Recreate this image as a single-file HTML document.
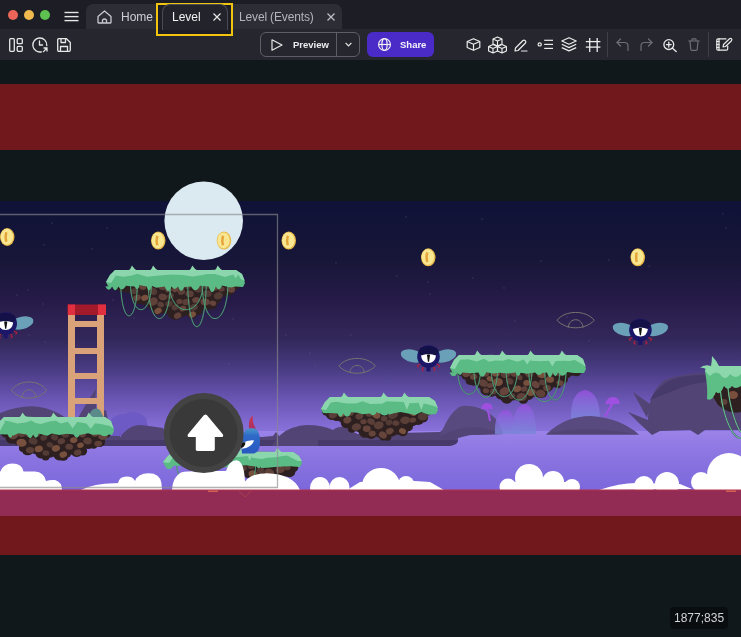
<!DOCTYPE html>
<html><head><meta charset="utf-8">
<style>
*{margin:0;padding:0;box-sizing:border-box}
html,body{width:741px;height:637px;overflow:hidden;background:#10181b;font-family:"Liberation Sans",sans-serif}
.abs{position:absolute}
#tabbar{left:0;top:0;width:741px;height:29px;background:#1d1e25;z-index:2}
#toolbar{left:0;top:29px;width:741px;height:31px;background:#25262e}
.dot{position:absolute;width:10px;height:10px;border-radius:50%;top:10px}
.tab{position:absolute;top:4px;height:25px;background:#2c2d35;border-radius:7px 7px 0 0}
.tabtxt{position:absolute;font-size:12px;line-height:12px;white-space:nowrap;will-change:transform}
svg.ic{position:absolute;overflow:visible}
#scene{position:absolute;left:0;top:60px;width:741px;height:577px}
</style></head><body>
<div id="tabbar" class="abs">
  <div class="dot" style="left:8px;background:#ec6559"></div>
  <div class="dot" style="left:24px;background:#f0b94e"></div>
  <div class="dot" style="left:40px;background:#5ec04f"></div>
  <svg class="ic" style="left:64px;top:11px" width="15" height="11" viewBox="0 0 15 11"><g stroke="#e6e6e6" stroke-width="1.4"><line x1="0.5" y1="1.5" x2="14.5" y2="1.5"/><line x1="0.5" y1="5.6" x2="14.5" y2="5.6"/><line x1="0.5" y1="9.6" x2="14.5" y2="9.6"/></g></svg>
  <div class="tab" style="left:86px;width:70px;border-radius:7px 0 0 0"></div>
  <svg class="ic" style="left:97px;top:10px" width="15" height="14" viewBox="0 0 15 14"><path d="M1 6.5 L7.5 1 L14 6.5 V12.5 Q14 13 13.5 13 H1.5 Q1 13 1 12.5 Z M5.5 13 V10 Q7.5 8 9.5 10 V13" fill="none" stroke="#c9c9cf" stroke-width="1.3" stroke-linejoin="round"/></svg>
  <div class="tabtxt" style="left:121px;top:11px;color:#cfcfd5">Home</div>
  <!-- yellow highlight -->
  <div class="abs" style="left:156px;top:3px;width:77px;height:33px;border:2px solid #f1c40f;background:#1e1f26"></div>
  <div class="abs" style="left:162px;top:4px;width:66px;height:26px;border:1px solid #4a4b53;border-bottom:none;border-radius:8px 8px 0 0;background:#23242b"></div>
  <div class="tabtxt" style="left:171.5px;top:11px;color:#f2f2f2">Level</div>
  <svg class="ic" style="left:213px;top:13px" width="8" height="8" viewBox="0 0 8 8"><path d="M0.5 0.5 L7.5 7.5 M7.5 0.5 L0.5 7.5" stroke="#e8e8e8" stroke-width="1.2"/></svg>
  <div class="tab" style="left:233px;width:109px;border-radius:0 7px 0 0"></div>
  <div class="tabtxt" style="left:239px;top:11px;color:#b4b4bc;letter-spacing:-0.15px">Level (Events)</div>
  <svg class="ic" style="left:327px;top:13px" width="8" height="8" viewBox="0 0 8 8"><path d="M0.5 0.5 L7.5 7.5 M7.5 0.5 L0.5 7.5" stroke="#c0c0c8" stroke-width="1.2"/></svg>
</div>
<div id="toolbar" class="abs">
  <!-- left icons -->
  <svg class="ic" style="left:9px;top:9px" width="14" height="14" viewBox="0 0 14 14"><g fill="none" stroke="#e8e8e8" stroke-width="1.3"><rect x="0.7" y="0.7" width="4.6" height="12.6" rx="1"/><rect x="8.2" y="0.7" width="5.1" height="5" rx="1"/><rect x="8.2" y="8.3" width="5.1" height="5" rx="1"/></g></svg>
  <svg class="ic" style="left:32px;top:8px" width="17" height="16" viewBox="0 0 17 16"><g fill="none" stroke="#e8e8e8" stroke-width="1.3" stroke-linecap="round"><path d="M14.8 8.5 A7 7 0 1 0 9.5 14.8"/><path d="M7.5 4 V8 H10.5"/><path d="M11.5 14.6 L15 11 M12 11 H15 V14"/></g></svg>
  <svg class="ic" style="left:57px;top:9px" width="14" height="14" viewBox="0 0 14 14"><g fill="none" stroke="#e8e8e8" stroke-width="1.3" stroke-linejoin="round"><path d="M1.5 0.7 H9.5 L13.3 4.5 V12 Q13.3 13.3 12 13.3 H2 Q0.7 13.3 0.7 12 V2 Q0.7 0.7 2 0.7 Z"/><path d="M4 0.7 V4.5 H8.5 V0.7"/><path d="M3.5 13.3 V8.5 H10.5 V13.3"/></g></svg>
  <!-- preview -->
  <div class="abs" style="left:260px;top:3px;width:100px;height:25px;border:1px solid #5d5e66;border-radius:6px"></div>
  <div class="abs" style="left:336px;top:4px;width:1px;height:23px;background:#5d5e66"></div>
  <svg class="ic" style="left:271px;top:10px" width="12" height="12" viewBox="0 0 12 12"><path d="M1 0.8 L11 6 L1 11.2 Z" fill="none" stroke="#e8e8e8" stroke-width="1.2" stroke-linejoin="round"/></svg>
  <div class="abs" style="left:293px;top:10px;font-size:9.5px;line-height:12px;font-weight:bold;color:#ececf0;will-change:transform">Preview</div>
  <svg class="ic" style="left:345px;top:13px" width="7" height="5" viewBox="0 0 7 5"><path d="M0.6 0.8 L3.5 3.8 L6.4 0.8" fill="none" stroke="#e8e8e8" stroke-width="1.2"/></svg>
  <!-- share -->
  <div class="abs" style="left:367px;top:3px;width:67px;height:25px;background:#4b2bc8;border-radius:6px"></div>
  <svg class="ic" style="left:378px;top:9px" width="13" height="13" viewBox="0 0 13 13"><g fill="none" stroke="#f0f0f0" stroke-width="1.2"><circle cx="6.5" cy="6.5" r="5.9"/><ellipse cx="6.5" cy="6.5" rx="2.6" ry="5.9"/><line x1="0.6" y1="6.5" x2="12.4" y2="6.5"/></g></svg>
  <div class="abs" style="left:400px;top:10px;font-size:9.5px;line-height:12px;font-weight:bold;color:#f4f4f8;will-change:transform">Share</div>
  <!-- right icons -->
  <svg class="ic" style="left:466px;top:9px" width="15" height="13" viewBox="0 0 15 13"><g fill="none" stroke="#ececec" stroke-width="1.2" stroke-linejoin="round"><path d="M7.5 0.7 L13.8 3.5 V9.5 L7.5 12.3 L1.2 9.5 V3.5 Z"/><path d="M1.2 3.5 L7.5 6.3 L13.8 3.5 M7.5 6.3 V12.3"/></g></svg>
  <svg class="ic" style="left:488px;top:7px" width="19" height="18" viewBox="0 0 19 18"><g fill="none" stroke="#ececec" stroke-width="1.15" stroke-linejoin="round"><path d="M9.5,1 L14,3 V8 L9.5,10 L5,8 V3 Z M5,3 L9.5,5 L14,3 M9.5,5 V10"/><path d="M5,8.5 L9.5,10.5 V15 L5,17 L0.6,15 V10.5 Z M0.6,10.5 L5,12.5 L9.5,10.5 M5,12.5 V17"/><path d="M14,8.5 L18.4,10.5 V15 L14,17 L9.5,15 V10.5 Z M9.5,10.5 L14,12.5 L18.4,10.5 M14,12.5 V17"/></g></svg>
  <svg class="ic" style="left:514px;top:10px" width="14" height="13" viewBox="0 0 14 13"><g fill="none" stroke="#ececec" stroke-width="1.2" stroke-linejoin="round" stroke-linecap="round"><path d="M1 12 L1.5 9 L9 1.5 Q10 0.7 11 1.5 L11.5 2 Q12.3 3 11.5 4 L4 11.5 Z"/><path d="M7.5 12 H13"/></g></svg>
  <svg class="ic" style="left:537px;top:11px" width="17" height="11" viewBox="0 0 17 11"><g fill="none" stroke="#ececec" stroke-width="1.2"><circle cx="2.7" cy="4.4" r="1.6"/><line x1="7.2" y1="0.3" x2="16" y2="0.3"/><line x1="7.2" y1="4.4" x2="16" y2="4.4"/><line x1="7.2" y1="8.4" x2="16" y2="8.4"/></g></svg>
  <svg class="ic" style="left:561px;top:8px" width="16" height="15" viewBox="0 0 16 15"><g fill="none" stroke="#ececec" stroke-width="1.2" stroke-linejoin="round"><path d="M8 0.7 L15.2 4 L8 7.3 L0.8 4 Z"/><path d="M0.8 7.3 L8 10.6 L15.2 7.3"/><path d="M0.8 10.6 L8 13.9 L15.2 10.6"/></g></svg>
  <svg class="ic" style="left:585px;top:9px" width="16" height="14" viewBox="0 0 16 14"><g stroke="#ececec" stroke-width="1.3"><line x1="4.7" y1="0" x2="4.7" y2="14"/><line x1="12.2" y1="0" x2="12.2" y2="14"/><line x1="0.8" y1="3.6" x2="15.4" y2="3.6"/><line x1="0.8" y1="9.1" x2="15.4" y2="9.1"/></g></svg>
  <div class="abs" style="left:607px;top:3px;width:1px;height:25px;background:#3e3f47"></div>
  <svg class="ic" style="left:616px;top:9px" width="13" height="13" viewBox="0 0 13 13"><g fill="none" stroke="#6e6f76" stroke-width="1.2" stroke-linecap="round" stroke-linejoin="round"><path d="M4.5 1 L1 4.5 L4.5 8"/><path d="M1 4.5 H8.5 Q12 4.5 12 8 V12.5"/></g></svg>
  <svg class="ic" style="left:640px;top:9px" width="13" height="13" viewBox="0 0 13 13"><g fill="none" stroke="#6e6f76" stroke-width="1.2" stroke-linecap="round" stroke-linejoin="round"><path d="M8.5 1 L12 4.5 L8.5 8"/><path d="M12 4.5 H4.5 Q1 4.5 1 8 V12.5"/></g></svg>
  <svg class="ic" style="left:663px;top:10px" width="14" height="13" viewBox="0 0 14 13"><g fill="none" stroke="#ececec" stroke-width="1.3" stroke-linecap="round"><circle cx="5.8" cy="5.6" r="4.9"/><line x1="9.5" y1="9.3" x2="13.2" y2="12.6"/><line x1="5.8" y1="3.2" x2="5.8" y2="8"/><line x1="3.4" y1="5.6" x2="8.2" y2="5.6"/></g></svg>
  <svg class="ic" style="left:688px;top:9px" width="12" height="13" viewBox="0 0 12 13"><g fill="none" stroke="#6e6f76" stroke-width="1.2" stroke-linejoin="round" stroke-linecap="round"><path d="M0.8 3 H11.2 M4 3 V1.5 Q4 0.8 4.7 0.8 H7.3 Q8 0.8 8 1.5 V3"/><path d="M2 3 L2.8 11.5 Q2.9 12.3 3.7 12.3 H8.3 Q9.1 12.3 9.2 11.5 L10 3"/></g></svg>
  <div class="abs" style="left:708px;top:3px;width:1px;height:25px;background:#3e3f47"></div>
  <svg class="ic" style="left:716px;top:9px" width="17" height="13" viewBox="0 0 17 13"><g fill="none" stroke="#ececec" stroke-width="1.2" stroke-linejoin="round" stroke-linecap="round"><path d="M10 0.8 H2 Q0.8 0.8 0.8 2 V11 Q0.8 12.2 2 12.2 H10.5 Q11.7 12.2 11.7 11 V8"/><path d="M3 0.8 V12.2"/><path d="M0.8 3.5 H3 M0.8 6.5 H3 M0.8 9.5 H3"/><path d="M7 9 L7.5 6.5 L13.5 0.8 Q14.5 0 15.5 0.8 Q16.3 1.8 15.5 2.7 L9.5 8.5 Z"/></g></svg>
</div>
<div id="scene">
<svg width="741" height="577" viewBox="0 60 741 577" style="display:block">
  <defs>
    <linearGradient id="sky" x1="0" y1="201" x2="0" y2="432" gradientUnits="userSpaceOnUse">
      <stop offset="0" stop-color="#0f1237"/>
      <stop offset="0.255" stop-color="#171638"/>
      <stop offset="0.43" stop-color="#261b48"/>
      <stop offset="0.60" stop-color="#33285a"/>
      <stop offset="0.73" stop-color="#4a3c84"/>
      <stop offset="0.86" stop-color="#6a56b4"/>
      <stop offset="1" stop-color="#8a72dc"/>
    </linearGradient>
    <linearGradient id="gnd" x1="0" y1="431" x2="0" y2="490" gradientUnits="userSpaceOnUse">
      <stop offset="0" stop-color="#9a82e8"/>
      <stop offset="0.45" stop-color="#8a74e0"/>
      <stop offset="1" stop-color="#7c68dc"/>
    </linearGradient>
  </defs>
  <rect x="0" y="60" width="741" height="577" fill="#10181b"/>
  <rect x="0" y="84" width="741" height="66" fill="#70181c"/>
  <rect x="0" y="201" width="741" height="231" fill="url(#sky)"/><rect x="0" y="431" width="741" height="59" fill="url(#gnd)"/>
  <!--SCENE-->
<circle cx="240" cy="234" r="0.7" fill="#6a6a90" opacity="0.45"/>
<circle cx="482" cy="219" r="0.7" fill="#6a6a90" opacity="0.45"/>
<circle cx="397" cy="276" r="0.7" fill="#6a6a90" opacity="0.45"/>
<circle cx="43" cy="304" r="0.7" fill="#6a6a90" opacity="0.45"/>
<circle cx="28" cy="290" r="0.7" fill="#6a6a90" opacity="0.45"/>
<circle cx="52" cy="223" r="0.7" fill="#6a6a90" opacity="0.45"/>
<circle cx="315" cy="366" r="0.7" fill="#6a6a90" opacity="0.45"/>
<circle cx="92" cy="249" r="0.7" fill="#6a6a90" opacity="0.45"/>
<circle cx="465" cy="390" r="0.7" fill="#6a6a90" opacity="0.45"/>
<circle cx="428" cy="282" r="0.7" fill="#6a6a90" opacity="0.45"/>
<circle cx="723" cy="214" r="0.7" fill="#6a6a90" opacity="0.45"/>
<circle cx="636" cy="261" r="0.7" fill="#6a6a90" opacity="0.45"/>
<circle cx="107" cy="228" r="0.7" fill="#6a6a90" opacity="0.45"/>
<circle cx="229" cy="364" r="0.7" fill="#6a6a90" opacity="0.45"/>
<circle cx="134" cy="318" r="0.7" fill="#6a6a90" opacity="0.45"/>
<circle cx="473" cy="278" r="0.7" fill="#6a6a90" opacity="0.45"/>
<circle cx="406" cy="217" r="0.7" fill="#6a6a90" opacity="0.45"/>
<circle cx="44" cy="245" r="0.7" fill="#6a6a90" opacity="0.45"/>
<circle cx="504" cy="288" r="0.7" fill="#6a6a90" opacity="0.45"/>
<circle cx="233" cy="319" r="0.7" fill="#6a6a90" opacity="0.45"/>
<circle cx="336" cy="263" r="0.7" fill="#6a6a90" opacity="0.45"/>
<circle cx="589" cy="341" r="0.7" fill="#6a6a90" opacity="0.45"/>
<circle cx="181" cy="317" r="0.7" fill="#6a6a90" opacity="0.45"/>
<circle cx="389" cy="376" r="0.7" fill="#6a6a90" opacity="0.45"/>
<circle cx="541" cy="261" r="0.7" fill="#6a6a90" opacity="0.45"/>
<circle cx="726" cy="228" r="0.7" fill="#6a6a90" opacity="0.45"/>
<circle cx="310" cy="353" r="0.7" fill="#6a6a90" opacity="0.45"/>
<circle cx="113" cy="300" r="0.7" fill="#6a6a90" opacity="0.45"/>
<circle cx="29" cy="335" r="0.7" fill="#6a6a90" opacity="0.45"/>
<circle cx="567" cy="317" r="0.7" fill="#6a6a90" opacity="0.45"/>
<circle cx="649" cy="266" r="0.7" fill="#6a6a90" opacity="0.45"/>
<circle cx="515" cy="321" r="0.7" fill="#6a6a90" opacity="0.45"/>
<circle cx="430" cy="294" r="0.7" fill="#6a6a90" opacity="0.45"/>
<circle cx="622" cy="389" r="0.7" fill="#6a6a90" opacity="0.45"/>
<circle cx="351" cy="335" r="0.7" fill="#6a6a90" opacity="0.45"/>
<circle cx="45" cy="342" r="0.7" fill="#6a6a90" opacity="0.45"/>
<circle cx="480" cy="399" r="0.7" fill="#6a6a90" opacity="0.45"/>
<circle cx="609" cy="260" r="0.7" fill="#6a6a90" opacity="0.45"/>
<circle cx="286" cy="335" r="0.7" fill="#6a6a90" opacity="0.45"/>
<circle cx="17" cy="295" r="0.7" fill="#6a6a90" opacity="0.45"/>
<path d="M0,413 Q25,403 45,408 Q58,412 66,418 L78,418 Q88,400 96,389 Q94,405 99,418 L103,411 L106,410 L108,420 L120,430 L120,437 L0,437 Z" fill="#524474"/>
<path d="M105,436 Q108,413 125,414 Q135,408 146,418 L150,436 Z" fill="#6e5ac4"/>
<path d="M118,440 Q128,425 140,425 Q150,426 163,428 L170,440 Z" fill="#524474"/>
<path d="M0,437 L262,437 L273,436 L276,432 L280,437 Q292,425 307,425 Q322,425 333,430 Q338,426 345,427 Q352,432 358,434 L440,432 Q465,412 480,411 L482,432 L458,438 Q458,446 445,446 L0,446 Z" fill="#524474"/>
<path d="M0,440 L458,440 Q458,446 445,446 L0,446 Z" fill="#463a6a"/>
<path d="M440,436 Q450,410 462,406 Q480,404 495,418 Q502,428 503,434 Z" fill="#58497e"/>
<path d="M440,436 Q470,420 503,434 Z" fill="#524474"/>
<path d="M272,446 Q280,432 292,428 Q305,424 318,440 L318,446 Z" fill="#524474"/>
<defs><linearGradient id="mb" x1="0" y1="0" x2="0" y2="1"><stop offset="0" stop-color="#9a4ee0"/><stop offset="0.3" stop-color="#8a66dc"/><stop offset="1" stop-color="#7a86d8"/></linearGradient></defs>
<path d="M495,434 Q494,412 506,410 Q515,411 516,434 Z" fill="url(#mb)" opacity="0.85"/>
<path d="M513,434 Q512,406 525,404 Q536,406 536,434 Z" fill="url(#mb)" opacity="0.85"/>
<path d="M571,420 Q570,392 585,390 Q600,392 600,420 Z" fill="url(#mb)" opacity="0.85"/>
<g fill="#a050e0"><path d="M481,409 Q482,403 487,403 Q492,403 493,409 Z"/><path d="M486,408 L488,408 Q490,414 491,421 L489,421 Q488,414 486,408 Z"/><path d="M605,404 Q607,397 613,397 Q619,397 620,404 Z"/><path d="M611,403 L614,403 Q610,410 606,417 L604,416 Q608,410 611,403 Z"/></g>
<path d="M546,434.5 Q565,416 591,416 Q620,418 639,434.5 Z" fill="#58497e"/>
<path d="M546,434.5 Q580,424 639,434.5 Z" fill="#524474"/>
<path d="M628,412 L648,420 Q648,392 665,380 Q690,370 741,373 L741,430 L705,430 L698,435 L690,430 L660,431 L652,435 L640,424 Z M633,392 L650,404 L647,418 Z" fill="#524474"/>
<path d="M650,400 Q660,382 680,377 Q710,372 741,375 L741,382 Q700,378 670,392 Z" fill="#463a6a"/>
<circle cx="203.7" cy="220.8" r="39.3" fill="#dbeaf1"/>
<ellipse cx="7.25" cy="237.0" rx="7.25" ry="9.0" fill="#e8b848"/><ellipse cx="6.85" cy="236.8" rx="6.25" ry="8.0" fill="#f8e690"/><path d="M5.05,232.0 Q3.75,237.0 5.05,242.0 L7.45,241.5 Q6.25,237.0 7.45,232.5 Z" fill="#e4a43a"/>
<ellipse cx="158.25" cy="240.6" rx="7.25" ry="9.0" fill="#e8b848"/><ellipse cx="157.85" cy="240.4" rx="6.25" ry="8.0" fill="#f8e690"/><path d="M156.05,235.6 Q154.75,240.6 156.05,245.6 L158.45,245.1 Q157.25,240.6 158.45,236.1 Z" fill="#e4a43a"/>
<ellipse cx="223.95" cy="240.6" rx="7.25" ry="9.0" fill="#e8b848"/><ellipse cx="223.54999999999998" cy="240.4" rx="6.25" ry="8.0" fill="#f8e690"/><path d="M221.75,235.6 Q220.45,240.6 221.75,245.6 L224.14999999999998,245.1 Q222.95,240.6 224.14999999999998,236.1 Z" fill="#e4a43a"/>
<ellipse cx="288.75" cy="240.6" rx="7.25" ry="9.0" fill="#e8b848"/><ellipse cx="288.35" cy="240.4" rx="6.25" ry="8.0" fill="#f8e690"/><path d="M286.55,235.6 Q285.25,240.6 286.55,245.6 L288.95,245.1 Q287.75,240.6 288.95,236.1 Z" fill="#e4a43a"/>
<ellipse cx="428.25" cy="257.3" rx="7.25" ry="9.0" fill="#e8b848"/><ellipse cx="427.85" cy="257.1" rx="6.25" ry="8.0" fill="#f8e690"/><path d="M426.05,252.3 Q424.75,257.3 426.05,262.3 L428.45,261.8 Q427.25,257.3 428.45,252.8 Z" fill="#e4a43a"/>
<ellipse cx="637.75" cy="257.3" rx="7.25" ry="9.0" fill="#e8b848"/><ellipse cx="637.35" cy="257.1" rx="6.25" ry="8.0" fill="#f8e690"/><path d="M635.55,252.3 Q634.25,257.3 635.55,262.3 L637.95,261.8 Q636.75,257.3 637.95,252.8 Z" fill="#e4a43a"/>
<path d="M11.3,390.3 C19.1,379.2 38.8,379.2 46.6,390.3 C37.8,400.8 20.1,400.8 11.3,390.3 Z" fill="none" stroke="#76736f" stroke-width="1"/><path d="M21.9,398.0 C22.6,386.9 35.3,386.9 36.0,398.0" fill="none" stroke="#76736f" stroke-width="1"/>
<path d="M338.8,366.0 C346.8,355.9 367.3,355.9 375.3,366.0 C366.2,375.7 347.9,375.7 338.8,366.0 Z" fill="none" stroke="#76736f" stroke-width="1"/><path d="M349.8,373.0 C350.5,362.9 363.6,362.9 364.4,373.0" fill="none" stroke="#76736f" stroke-width="1"/>
<path d="M557,320.3 C565.2,309.8 586.1,309.8 594.3,320.3 C585.0,330.3 566.3,330.3 557,320.3 Z" fill="none" stroke="#76736f" stroke-width="1"/><path d="M568.2,327.6 C568.9,317.1 582.4,317.1 583.1,327.6" fill="none" stroke="#76736f" stroke-width="1"/>
<g fill="#daa279"><rect x="68" y="312" width="7" height="106"/><rect x="97" y="312" width="7" height="106"/><rect x="72" y="321" width="28" height="6"/><rect x="72" y="348" width="28" height="6"/><rect x="72" y="373" width="28" height="6"/><rect x="72" y="398" width="28" height="6"/></g>
<rect x="67.5" y="304.5" width="38.5" height="10.5" fill="#a31b2b"/><rect x="68" y="304.5" width="7" height="10.5" fill="#e03040"/><rect x="98" y="304.5" width="8" height="10.5" fill="#e03040"/>
<path d="M88,418 Q92,405 100,410 L104,418 Z" fill="#5a8a8a"/>
<g fill="#2e2020"><circle cx="116.0" cy="284.0" r="4.6"/><circle cx="120.9" cy="286.5" r="4.9"/><circle cx="125.9" cy="287.0" r="5.6"/><circle cx="129.5" cy="288.7" r="4.0"/><circle cx="135.1" cy="294.4" r="4.6"/><circle cx="139.2" cy="297.7" r="6.5"/><circle cx="143.9" cy="298.8" r="6.1"/><circle cx="148.6" cy="299.5" r="5.6"/><circle cx="152.5" cy="303.7" r="5.6"/><circle cx="158.1" cy="309.6" r="5.3"/><circle cx="163.5" cy="307.7" r="5.7"/><circle cx="167.1" cy="307.5" r="5.9"/><circle cx="172.1" cy="313.3" r="4.8"/><circle cx="175.7" cy="313.9" r="6.2"/><circle cx="180.4" cy="311.8" r="5.8"/><circle cx="186.1" cy="309.9" r="5.8"/><circle cx="191.9" cy="313.8" r="5.0"/><circle cx="197.4" cy="310.1" r="5.1"/><circle cx="203.2" cy="303.4" r="6.2"/><circle cx="207.0" cy="305.6" r="4.3"/><circle cx="211.0" cy="303.2" r="6.4"/><circle cx="215.6" cy="298.5" r="5.6"/><circle cx="219.8" cy="292.8" r="5.3"/><circle cx="224.3" cy="291.6" r="4.9"/><circle cx="229.3" cy="289.8" r="5.5"/><circle cx="235.0" cy="284.0" r="5.7"/><path d="M116,283 L116.0,284.0 L120.9,286.5 L125.9,287.0 L129.5,288.7 L135.1,294.4 L139.2,297.7 L143.9,298.8 L148.6,299.5 L152.5,303.7 L158.1,309.6 L163.5,307.7 L167.1,307.5 L172.1,313.3 L175.7,313.9 L180.4,311.8 L186.1,309.9 L191.9,313.8 L197.4,310.1 L203.2,303.4 L207.0,305.6 L211.0,303.2 L215.6,298.5 L219.8,292.8 L224.3,291.6 L229.3,289.8 L235.0,284.0 L238,283 Z"/></g>
<ellipse cx="218.3" cy="295.7" rx="4.5" ry="3.5" transform="rotate(-20 218.3 295.7)" fill="#523a35"/><ellipse cx="230.9" cy="289.2" rx="4.3" ry="3.4" transform="rotate(13 230.9 289.2)" fill="#65443b"/><ellipse cx="192.4" cy="314.5" rx="3.7" ry="2.9" transform="rotate(-23 192.4 314.5)" fill="#77503e"/><ellipse cx="153.1" cy="301.5" rx="4.9" ry="3.9" transform="rotate(-27 153.1 301.5)" fill="#5f413a"/><ellipse cx="207.3" cy="293.6" rx="4.4" ry="3.4" transform="rotate(3 207.3 293.6)" fill="#523a35"/><ellipse cx="177.6" cy="315.6" rx="3.8" ry="3.0" transform="rotate(-25 177.6 315.6)" fill="#5f413a"/><ellipse cx="152.8" cy="291.2" rx="4.6" ry="3.6" transform="rotate(29 152.8 291.2)" fill="#523a35"/><ellipse cx="162.8" cy="296.9" rx="4.2" ry="3.3" transform="rotate(9 162.8 296.9)" fill="#5f413a"/><ellipse cx="198.0" cy="288.5" rx="5.1" ry="4.0" transform="rotate(19 198.0 288.5)" fill="#523a35"/><ellipse cx="169.0" cy="303.8" rx="3.7" ry="2.9" transform="rotate(-12 169.0 303.8)" fill="#523a35"/><ellipse cx="179.5" cy="301.5" rx="3.2" ry="2.5" transform="rotate(-5 179.5 301.5)" fill="#5f413a"/><ellipse cx="134.5" cy="291.1" rx="3.9" ry="3.0" transform="rotate(-9 134.5 291.1)" fill="#523a35"/><ellipse cx="189.6" cy="293.8" rx="4.2" ry="3.3" transform="rotate(5 189.6 293.8)" fill="#5a3e38"/><ellipse cx="144.8" cy="297.8" rx="3.7" ry="2.9" transform="rotate(-19 144.8 297.8)" fill="#77503e"/><ellipse cx="212.9" cy="303.2" rx="3.4" ry="2.6" transform="rotate(15 212.9 303.2)" fill="#65443b"/><ellipse cx="195.9" cy="300.0" rx="3.8" ry="2.9" transform="rotate(-10 195.9 300.0)" fill="#65443b"/><ellipse cx="221.5" cy="289.0" rx="3.3" ry="2.6" transform="rotate(-1 221.5 289.0)" fill="#5a3e38"/><ellipse cx="187.2" cy="286.1" rx="3.5" ry="2.7" transform="rotate(16 187.2 286.1)" fill="#5a3e38"/><ellipse cx="182.8" cy="308.5" rx="3.6" ry="2.8" transform="rotate(-25 182.8 308.5)" fill="#65443b"/><ellipse cx="193.7" cy="307.2" rx="4.2" ry="3.3" transform="rotate(-22 193.7 307.2)" fill="#523a35"/><ellipse cx="205.2" cy="301.9" rx="4.7" ry="3.7" transform="rotate(6 205.2 301.9)" fill="#65443b"/><ellipse cx="142.8" cy="287.0" rx="3.6" ry="2.8" transform="rotate(12 142.8 287.0)" fill="#65443b"/><ellipse cx="175.3" cy="289.3" rx="3.3" ry="2.6" transform="rotate(-25 175.3 289.3)" fill="#65443b"/><ellipse cx="158.1" cy="310.8" rx="3.8" ry="3.0" transform="rotate(-27 158.1 310.8)" fill="#77503e"/><ellipse cx="214.8" cy="287.7" rx="3.2" ry="2.5" transform="rotate(28 214.8 287.7)" fill="#65443b"/><ellipse cx="170.5" cy="296.0" rx="3.4" ry="2.7" transform="rotate(-30 170.5 296.0)" fill="#523a35"/><ellipse cx="175.3" cy="307.1" rx="3.8" ry="3.0" transform="rotate(-29 175.3 307.1)" fill="#523a35"/><ellipse cx="162.5" cy="287.0" rx="3.9" ry="3.0" transform="rotate(8 162.5 287.0)" fill="#5f413a"/><ellipse cx="186.2" cy="302.1" rx="3.8" ry="3.0" transform="rotate(-6 186.2 302.1)" fill="#5a3e38"/><ellipse cx="181.4" cy="291.8" rx="3.8" ry="3.0" transform="rotate(-11 181.4 291.8)" fill="#5a3e38"/><ellipse cx="160.7" cy="304.4" rx="3.5" ry="2.7" transform="rotate(25 160.7 304.4)" fill="#5a3e38"/><ellipse cx="137.0" cy="297.8" rx="3.9" ry="3.0" transform="rotate(-22 137.0 297.8)" fill="#65443b"/><ellipse cx="206.7" cy="286.3" rx="3.3" ry="2.6" transform="rotate(6 206.7 286.3)" fill="#523a35"/><ellipse cx="168.5" cy="289.8" rx="3.4" ry="2.6" transform="rotate(-8 168.5 289.8)" fill="#5f413a"/>
<path d="M120.7,284 C121.7,326.5 136.4,326.5 137.4,284" fill="none" stroke="#2f5a4a" stroke-width="1.4" opacity="0.5"/><path d="M120.7,284 C121.7,326.5 136.4,326.5 137.4,284" fill="none" stroke="#58b084" stroke-width="0.8"/><path d="M130.4,284 C131.4,318.2 150.6,318.2 151.6,284" fill="none" stroke="#2f5a4a" stroke-width="1.4" opacity="0.5"/><path d="M130.4,284 C131.4,318.2 150.6,318.2 151.6,284" fill="none" stroke="#58b084" stroke-width="0.8"/><path d="M148.2,284 C149.2,330.1 169.4,330.1 170.4,284" fill="none" stroke="#2f5a4a" stroke-width="1.4" opacity="0.5"/><path d="M148.2,284 C149.2,330.1 169.4,330.1 170.4,284" fill="none" stroke="#58b084" stroke-width="0.8"/><path d="M169.2,284 C170.2,318.2 202.0,318.2 203.0,284" fill="none" stroke="#2f5a4a" stroke-width="1.4" opacity="0.5"/><path d="M169.2,284 C170.2,318.2 202.0,318.2 203.0,284" fill="none" stroke="#58b084" stroke-width="0.8"/><path d="M187.7,284 C188.7,340.9 205.2,340.9 206.2,284" fill="none" stroke="#2f5a4a" stroke-width="1.4" opacity="0.5"/><path d="M187.7,284 C188.7,340.9 205.2,340.9 206.2,284" fill="none" stroke="#58b084" stroke-width="0.8"/><path d="M202.1,284 C203.1,330.1 227.0,330.1 228.0,284" fill="none" stroke="#2f5a4a" stroke-width="1.4" opacity="0.5"/><path d="M202.1,284 C203.1,330.1 227.0,330.1 228.0,284" fill="none" stroke="#58b084" stroke-width="0.8"/>
<path d="M108,286 L106,282 L110,275 L115,270 L126.0,270.5 L137.0,270.5 L148.0,270.2 L159.0,270.7 L170.0,270.3 L181.0,269.9 L192.0,270.0 L203.0,270.4 L214.0,269.7 L225.0,270.5 L236,270 L242,274 L245,283 L243,287 L235.4,286.6 L230.7,287.6 L221.8,285.5 L221.8,286.5 Q218.8,292.2 215.8,286.5 L215.8,286.5 Q212.2,297.5 208.7,286.5 L199.7,285.8 L199.7,286.5 Q195.4,294.1 191.1,286.5 L184.4,286.9 L184.4,286.5 Q181.2,295.1 178.0,286.5 L178.0,286.5 Q174.7,291.4 171.5,286.5 L171.5,286.5 Q168.1,295.4 164.7,286.5 L156.4,287.7 L151.5,285.7 L151.5,286.5 Q149.1,294.4 146.7,286.5 L139.3,285.1 L139.3,286.5 Q137.0,291.7 134.6,286.5 L125.6,285.8 L125.6,286.5 Q121.9,291.9 118.2,286.5 L118.2,286.5 Q115.2,294.0 112.2,286.5 L112.2,286.5 Q108.8,293.0 105.3,286.5 L110,286 Z" fill="#5bbb84"/>
<path d="M106,282 L110,275 L115,270 L236,270 L242,274 L245,281 L241,279 L238.0,274.4 L235.7,278.5 L233.4,274.4 L224.7,277.0 L215.0,274.1 L207.5,273.9 L199.5,275.5 L192.6,276.6 L182.7,275.0 L172.8,274.6 L168.7,274.7 L159.1,275.6 L152.1,276.3 L147.0,276.7 L137.3,273.7 L131.9,275.5 L123.7,276.7 L116.4,275.8 L116,275 L113,280 L111,283 Z" fill="#8cd6ad"/>
<path d="M127.9,271 Q130.9,269.0 131.9,265.5 Q133.9,269.0 137.9,271 Z" fill="#8cd8ac"/><path d="M149.1,271 Q152.1,269.0 153.1,265.5 Q155.1,269.0 159.1,271 Z" fill="#8cd8ac"/><path d="M188.3,271 Q191.3,269.0 192.3,265.5 Q194.3,269.0 198.3,271 Z" fill="#8cd8ac"/><path d="M213.7,271 Q216.7,269.0 217.7,265.5 Q219.7,269.0 223.7,271 Z" fill="#8cd8ac"/>
<g fill="#2e2020"><circle cx="6.0" cy="432.0" r="5.6"/><circle cx="11.4" cy="437.8" r="6.0"/><circle cx="17.2" cy="439.0" r="5.8"/><circle cx="23.0" cy="448.0" r="4.1"/><circle cx="27.7" cy="448.9" r="6.4"/><circle cx="32.8" cy="447.2" r="6.3"/><circle cx="36.6" cy="449.0" r="5.2"/><circle cx="40.7" cy="453.0" r="5.4"/><circle cx="45.6" cy="456.4" r="4.0"/><circle cx="49.7" cy="453.1" r="4.7"/><circle cx="55.5" cy="451.4" r="5.9"/><circle cx="59.4" cy="454.4" r="6.0"/><circle cx="63.2" cy="455.3" r="5.5"/><circle cx="67.0" cy="453.6" r="4.0"/><circle cx="72.7" cy="450.3" r="4.5"/><circle cx="76.7" cy="450.5" r="6.5"/><circle cx="82.4" cy="450.9" r="4.7"/><circle cx="88.3" cy="443.7" r="5.3"/><circle cx="93.5" cy="444.3" r="4.5"/><circle cx="99.4" cy="441.4" r="5.7"/><circle cx="105.3" cy="432.0" r="6.2"/><path d="M6,431 L6.0,432.0 L11.4,437.8 L17.2,439.0 L23.0,448.0 L27.7,448.9 L32.8,447.2 L36.6,449.0 L40.7,453.0 L45.6,456.4 L49.7,453.1 L55.5,451.4 L59.4,454.4 L63.2,455.3 L67.0,453.6 L72.7,450.3 L76.7,450.5 L82.4,450.9 L88.3,443.7 L93.5,444.3 L99.4,441.4 L105.3,432.0 L108,431 Z"/></g>
<ellipse cx="43.7" cy="437.7" rx="3.5" ry="2.7" transform="rotate(-26 43.7 437.7)" fill="#523a35"/><ellipse cx="87.5" cy="440.9" rx="4.4" ry="3.4" transform="rotate(12 87.5 440.9)" fill="#5a3e38"/><ellipse cx="38.8" cy="448.9" rx="4.2" ry="3.2" transform="rotate(-11 38.8 448.9)" fill="#77503e"/><ellipse cx="54.4" cy="437.3" rx="3.7" ry="2.9" transform="rotate(26 54.4 437.3)" fill="#523a35"/><ellipse cx="13.5" cy="435.1" rx="5.1" ry="4.0" transform="rotate(-18 13.5 435.1)" fill="#65443b"/><ellipse cx="98.2" cy="443.7" rx="3.9" ry="3.0" transform="rotate(-9 98.2 443.7)" fill="#5f413a"/><ellipse cx="33.1" cy="441.1" rx="4.4" ry="3.4" transform="rotate(17 33.1 441.1)" fill="#523a35"/><ellipse cx="61.3" cy="441.2" rx="3.8" ry="3.0" transform="rotate(-19 61.3 441.2)" fill="#5a3e38"/><ellipse cx="69.2" cy="446.7" rx="3.8" ry="3.0" transform="rotate(-1 69.2 446.7)" fill="#5a3e38"/><ellipse cx="103.0" cy="436.2" rx="4.8" ry="3.7" transform="rotate(-10 103.0 436.2)" fill="#65443b"/><ellipse cx="21.5" cy="442.8" rx="5.1" ry="4.0" transform="rotate(8 21.5 442.8)" fill="#77503e"/><ellipse cx="55.9" cy="448.3" rx="4.2" ry="3.2" transform="rotate(-13 55.9 448.3)" fill="#77503e"/><ellipse cx="65.4" cy="434.7" rx="3.8" ry="3.0" transform="rotate(4 65.4 434.7)" fill="#523a35"/><ellipse cx="77.7" cy="452.5" rx="3.9" ry="3.0" transform="rotate(-19 77.7 452.5)" fill="#5a3e38"/><ellipse cx="73.7" cy="440.1" rx="3.7" ry="2.9" transform="rotate(-9 73.7 440.1)" fill="#77503e"/><ellipse cx="94.8" cy="434.0" rx="3.4" ry="2.7" transform="rotate(4 94.8 434.0)" fill="#5f413a"/><ellipse cx="45.9" cy="453.1" rx="3.5" ry="2.7" transform="rotate(6 45.9 453.1)" fill="#523a35"/><ellipse cx="80.5" cy="445.3" rx="3.3" ry="2.6" transform="rotate(-15 80.5 445.3)" fill="#77503e"/><ellipse cx="49.9" cy="444.7" rx="3.3" ry="2.6" transform="rotate(14 49.9 444.7)" fill="#523a35"/><ellipse cx="82.0" cy="434.0" rx="4.1" ry="3.2" transform="rotate(23 82.0 434.0)" fill="#5f413a"/><ellipse cx="21.6" cy="434.3" rx="3.5" ry="2.7" transform="rotate(11 21.6 434.3)" fill="#5a3e38"/><ellipse cx="30.0" cy="450.2" rx="4.1" ry="3.2" transform="rotate(-2 30.0 450.2)" fill="#5a3e38"/><ellipse cx="63.3" cy="454.6" rx="3.9" ry="3.0" transform="rotate(-23 63.3 454.6)" fill="#77503e"/><ellipse cx="36.7" cy="434.1" rx="3.5" ry="2.7" transform="rotate(-4 36.7 434.1)" fill="#5a3e38"/><ellipse cx="28.5" cy="434.2" rx="3.4" ry="2.7" transform="rotate(1 28.5 434.2)" fill="#5a3e38"/>
<path d="M-3,434 L-5,430 L-1,422 L4,417 L15.2,417.5 L26.4,416.5 L37.7,417.2 L48.9,417.7 L60.1,417.7 L71.3,416.9 L82.6,417.1 L93.8,417.7 L105,417 L111,421 L114,431 L112,435 L109.0,434.5 Q104.5,438.0 100.0,434.5 L92.6,434.8 L88.1,433.2 L79.8,434.9 L79.8,434.5 Q76.7,440.8 73.6,434.5 L67.1,433.7 L59.0,434.9 L51.8,433.6 L47.3,435.7 L38.5,433.6 L38.5,434.5 Q35.9,441.2 33.2,434.5 L33.2,434.5 Q30.1,441.8 26.9,434.5 L18.4,433.2 L13.0,435.7 L13.0,434.5 Q10.4,440.9 7.7,434.5 L-1.2,434.3 L-1,434 Z" fill="#5bbb84"/>
<path d="M-5,430 L-1,422 L4,417 L105,417 L111,421 L114,429 L110,426 L100.6,424.0 L94.9,423.2 L94.9,423.4 L90.7,428.7 L86.4,423.4 L77.4,422.1 L77.4,421.7 L72.6,428.3 L67.9,421.7 L60.7,423.6 L55.9,420.7 L49.3,421.5 L40.9,424.0 L35.5,422.9 L31.3,420.5 L25.8,422.5 L17.2,423.6 L7.9,420.9 L3.9,420.8 L5,422 L2,427 L0,431 Z" fill="#8cd6ad"/>
<path d="M18.4,418 Q21.4,416.0 22.4,412.5 Q24.4,416.0 28.4,418 Z" fill="#8cd8ac"/><path d="M49.3,418 Q52.3,416.0 53.3,412.5 Q55.3,416.0 59.3,418 Z" fill="#8cd8ac"/><path d="M84.6,418 Q87.6,416.0 88.6,412.5 Q90.6,416.0 94.6,418 Z" fill="#8cd8ac"/>
<g fill="#2e2020"><circle cx="327.0" cy="411.0" r="5.1"/><circle cx="331.9" cy="413.6" r="6.3"/><circle cx="336.6" cy="415.7" r="5.3"/><circle cx="341.5" cy="417.6" r="4.5"/><circle cx="346.3" cy="422.6" r="5.6"/><circle cx="351.8" cy="428.5" r="4.2"/><circle cx="356.1" cy="427.3" r="4.2"/><circle cx="361.6" cy="427.8" r="5.7"/><circle cx="365.2" cy="431.3" r="6.5"/><circle cx="371.1" cy="433.4" r="5.6"/><circle cx="376.1" cy="431.9" r="4.4"/><circle cx="379.7" cy="432.2" r="5.3"/><circle cx="383.3" cy="436.0" r="4.5"/><circle cx="387.4" cy="436.7" r="4.1"/><circle cx="392.1" cy="431.3" r="5.1"/><circle cx="397.7" cy="429.4" r="5.3"/><circle cx="402.8" cy="431.0" r="5.2"/><circle cx="407.9" cy="426.5" r="5.1"/><circle cx="412.1" cy="419.7" r="6.5"/><circle cx="418.1" cy="419.0" r="6.1"/><circle cx="423.4" cy="417.6" r="4.8"/><circle cx="427.5" cy="411.0" r="4.7"/><path d="M327,410 L327.0,411.0 L331.9,413.6 L336.6,415.7 L341.5,417.6 L346.3,422.6 L351.8,428.5 L356.1,427.3 L361.6,427.8 L365.2,431.3 L371.1,433.4 L376.1,431.9 L379.7,432.2 L383.3,436.0 L387.4,436.7 L392.1,431.3 L397.7,429.4 L402.8,431.0 L407.9,426.5 L412.1,419.7 L418.1,419.0 L423.4,417.6 L427.5,411.0 L431,410 Z"/></g>
<ellipse cx="405.1" cy="420.2" rx="4.9" ry="3.8" transform="rotate(-7 405.1 420.2)" fill="#5a3e38"/><ellipse cx="413.0" cy="413.0" rx="3.6" ry="2.8" transform="rotate(25 413.0 413.0)" fill="#77503e"/><ellipse cx="366.8" cy="428.7" rx="4.0" ry="3.2" transform="rotate(4 366.8 428.7)" fill="#65443b"/><ellipse cx="341.6" cy="414.2" rx="3.4" ry="2.7" transform="rotate(-26 341.6 414.2)" fill="#77503e"/><ellipse cx="347.4" cy="420.1" rx="4.1" ry="3.2" transform="rotate(-19 347.4 420.1)" fill="#65443b"/><ellipse cx="371.1" cy="421.5" rx="4.0" ry="3.1" transform="rotate(29 371.1 421.5)" fill="#5a3e38"/><ellipse cx="356.4" cy="427.0" rx="4.8" ry="3.7" transform="rotate(-12 356.4 427.0)" fill="#5a3e38"/><ellipse cx="392.9" cy="414.9" rx="5.2" ry="4.0" transform="rotate(-17 392.9 414.9)" fill="#523a35"/><ellipse cx="389.8" cy="431.1" rx="4.0" ry="3.1" transform="rotate(-26 389.8 431.1)" fill="#65443b"/><ellipse cx="402.5" cy="431.1" rx="3.6" ry="2.8" transform="rotate(27 402.5 431.1)" fill="#77503e"/><ellipse cx="389.1" cy="422.5" rx="3.4" ry="2.7" transform="rotate(-28 389.1 422.5)" fill="#523a35"/><ellipse cx="350.0" cy="413.3" rx="3.7" ry="2.9" transform="rotate(-3 350.0 413.3)" fill="#5a3e38"/><ellipse cx="422.8" cy="416.6" rx="5.0" ry="3.9" transform="rotate(-2 422.8 416.6)" fill="#523a35"/><ellipse cx="332.9" cy="415.2" rx="4.2" ry="3.2" transform="rotate(-16 332.9 415.2)" fill="#5a3e38"/><ellipse cx="378.7" cy="425.2" rx="5.0" ry="3.9" transform="rotate(-15 378.7 425.2)" fill="#5a3e38"/><ellipse cx="382.9" cy="435.0" rx="4.2" ry="3.3" transform="rotate(30 382.9 435.0)" fill="#65443b"/><ellipse cx="376.4" cy="415.4" rx="4.1" ry="3.2" transform="rotate(19 376.4 415.4)" fill="#77503e"/><ellipse cx="395.9" cy="423.1" rx="3.5" ry="2.7" transform="rotate(11 395.9 423.1)" fill="#5a3e38"/><ellipse cx="363.5" cy="421.8" rx="3.2" ry="2.5" transform="rotate(-9 363.5 421.8)" fill="#5f413a"/><ellipse cx="359.3" cy="416.2" rx="4.0" ry="3.1" transform="rotate(-19 359.3 416.2)" fill="#5a3e38"/><ellipse cx="412.9" cy="420.1" rx="3.4" ry="2.6" transform="rotate(-14 412.9 420.1)" fill="#5f413a"/><ellipse cx="372.2" cy="433.6" rx="3.6" ry="2.8" transform="rotate(-6 372.2 433.6)" fill="#65443b"/><ellipse cx="369.1" cy="413.9" rx="3.6" ry="2.8" transform="rotate(8 369.1 413.9)" fill="#5a3e38"/><ellipse cx="384.2" cy="418.7" rx="3.4" ry="2.7" transform="rotate(-4 384.2 418.7)" fill="#5a3e38"/>
<path d="M323,413 L321,409 L325,402 L330,397 L341.0,397.6 L352.0,397.5 L363.0,397.5 L374.0,397.2 L385.0,397.4 L396.0,397.7 L407.0,396.8 L418.0,397.4 L429,397 L435,401 L438,410 L436,414 L428.6,414.8 L421.3,412.0 L415.0,414.9 L408.3,413.5 L400.6,412.1 L393.8,413.3 L388.9,414.8 L388.9,413.5 Q384.5,417.6 380.1,413.5 L376.1,412.3 L376.1,413.5 Q373.0,416.9 369.9,413.5 L362.8,414.2 L357.6,412.8 L350.8,412.2 L350.8,413.5 Q347.0,420.2 343.3,413.5 L343.3,413.5 Q340.4,420.0 337.5,413.5 L330.9,412.9 L324.3,413.3 L325,413 Z" fill="#5bbb84"/>
<path d="M321,409 L325,402 L330,397 L429,397 L435,401 L438,408 L434,406 L424.0,403.6 L424.0,402.7 L421.3,410.0 L418.6,402.7 L410.0,403.2 L410.0,402.1 L406.9,409.9 L403.8,402.1 L399.2,401.7 L391.2,401.5 L386.7,401.3 L382.1,403.7 L375.6,403.7 L370.4,403.9 L362.5,401.2 L356.8,403.2 L351.8,403.4 L347.6,403.4 L343.4,403.1 L336.1,401.8 L327.9,402.9 L331,402 L328,407 L326,410 Z" fill="#8cd6ad"/>
<path d="M339.9,398 Q342.9,396.0 343.9,392.5 Q345.9,396.0 349.9,398 Z" fill="#8cd8ac"/><path d="M379.5,398 Q382.5,396.0 383.5,392.5 Q385.5,396.0 389.5,398 Z" fill="#8cd8ac"/><path d="M400.3,398 Q403.3,396.0 404.3,392.5 Q406.3,396.0 410.3,398 Z" fill="#8cd8ac"/>
<g fill="#2e2020"><circle cx="455.0" cy="370.0" r="4.6"/><circle cx="460.2" cy="370.0" r="5.7"/><circle cx="465.8" cy="375.2" r="4.5"/><circle cx="469.9" cy="380.5" r="4.4"/><circle cx="474.0" cy="379.9" r="5.8"/><circle cx="477.8" cy="380.3" r="5.3"/><circle cx="481.8" cy="384.5" r="4.7"/><circle cx="486.4" cy="389.4" r="6.1"/><circle cx="491.4" cy="392.8" r="4.0"/><circle cx="495.6" cy="391.3" r="4.4"/><circle cx="501.3" cy="393.8" r="6.0"/><circle cx="506.8" cy="397.6" r="6.1"/><circle cx="512.2" cy="394.1" r="6.4"/><circle cx="517.7" cy="395.9" r="4.6"/><circle cx="523.3" cy="398.6" r="5.2"/><circle cx="528.7" cy="394.5" r="5.4"/><circle cx="533.3" cy="391.5" r="4.9"/><circle cx="537.8" cy="392.8" r="4.8"/><circle cx="541.6" cy="391.9" r="6.0"/><circle cx="547.1" cy="385.5" r="6.5"/><circle cx="552.3" cy="382.2" r="5.4"/><circle cx="557.7" cy="383.9" r="4.3"/><circle cx="562.9" cy="379.0" r="5.1"/><circle cx="566.8" cy="373.9" r="4.5"/><circle cx="571.7" cy="371.2" r="4.6"/><circle cx="576.3" cy="370.8" r="5.5"/><path d="M455,369 L455.0,370.0 L460.2,370.0 L465.8,375.2 L469.9,380.5 L474.0,379.9 L477.8,380.3 L481.8,384.5 L486.4,389.4 L491.4,392.8 L495.6,391.3 L501.3,393.8 L506.8,397.6 L512.2,394.1 L517.7,395.9 L523.3,398.6 L528.7,394.5 L533.3,391.5 L537.8,392.8 L541.6,391.9 L547.1,385.5 L552.3,382.2 L557.7,383.9 L562.9,379.0 L566.8,373.9 L571.7,371.2 L576.3,370.8 L580,369 Z"/></g>
<ellipse cx="473.6" cy="376.8" rx="3.7" ry="2.9" transform="rotate(-16 473.6 376.8)" fill="#65443b"/><ellipse cx="541.5" cy="374.9" rx="4.1" ry="3.2" transform="rotate(8 541.5 374.9)" fill="#77503e"/><ellipse cx="504.4" cy="391.3" rx="5.1" ry="4.0" transform="rotate(-27 504.4 391.3)" fill="#65443b"/><ellipse cx="517.3" cy="388.9" rx="4.1" ry="3.2" transform="rotate(-15 517.3 388.9)" fill="#77503e"/><ellipse cx="560.5" cy="372.5" rx="4.6" ry="3.6" transform="rotate(-28 560.5 372.5)" fill="#5f413a"/><ellipse cx="484.8" cy="373.2" rx="4.5" ry="3.5" transform="rotate(3 484.8 373.2)" fill="#5f413a"/><ellipse cx="540.7" cy="393.6" rx="4.9" ry="3.8" transform="rotate(9 540.7 393.6)" fill="#5f413a"/><ellipse cx="529.1" cy="373.8" rx="4.1" ry="3.2" transform="rotate(-8 529.1 373.8)" fill="#5a3e38"/><ellipse cx="497.8" cy="382.1" rx="5.1" ry="4.0" transform="rotate(1 497.8 382.1)" fill="#77503e"/><ellipse cx="550.0" cy="379.5" rx="4.1" ry="3.2" transform="rotate(8 550.0 379.5)" fill="#77503e"/><ellipse cx="505.3" cy="374.4" rx="4.7" ry="3.7" transform="rotate(6 505.3 374.4)" fill="#5a3e38"/><ellipse cx="509.7" cy="381.2" rx="3.8" ry="3.0" transform="rotate(28 509.7 381.2)" fill="#5a3e38"/><ellipse cx="483.4" cy="383.2" rx="4.5" ry="3.5" transform="rotate(26 483.4 383.2)" fill="#5f413a"/><ellipse cx="531.0" cy="392.3" rx="4.7" ry="3.7" transform="rotate(-8 531.0 392.3)" fill="#77503e"/><ellipse cx="493.6" cy="391.2" rx="3.8" ry="3.0" transform="rotate(-25 493.6 391.2)" fill="#5a3e38"/><ellipse cx="535.7" cy="384.6" rx="4.2" ry="3.3" transform="rotate(30 535.7 384.6)" fill="#65443b"/><ellipse cx="560.1" cy="383.0" rx="3.7" ry="2.9" transform="rotate(18 560.1 383.0)" fill="#65443b"/><ellipse cx="542.6" cy="382.5" rx="3.6" ry="2.8" transform="rotate(13 542.6 382.5)" fill="#5a3e38"/><ellipse cx="527.0" cy="382.9" rx="3.7" ry="2.9" transform="rotate(-4 527.0 382.9)" fill="#77503e"/><ellipse cx="519.3" cy="377.3" rx="3.4" ry="2.6" transform="rotate(29 519.3 377.3)" fill="#5a3e38"/><ellipse cx="496.0" cy="373.6" rx="3.9" ry="3.0" transform="rotate(-5 496.0 373.6)" fill="#77503e"/><ellipse cx="466.6" cy="373.3" rx="4.6" ry="3.6" transform="rotate(-30 466.6 373.3)" fill="#65443b"/><ellipse cx="521.7" cy="397.0" rx="5.1" ry="4.0" transform="rotate(-1 521.7 397.0)" fill="#5f413a"/><ellipse cx="511.9" cy="396.1" rx="3.4" ry="2.7" transform="rotate(-16 511.9 396.1)" fill="#5a3e38"/><ellipse cx="547.0" cy="388.1" rx="3.9" ry="3.0" transform="rotate(6 547.0 388.1)" fill="#5f413a"/><ellipse cx="551.6" cy="372.3" rx="3.3" ry="2.6" transform="rotate(-2 551.6 372.3)" fill="#65443b"/><ellipse cx="486.0" cy="390.7" rx="3.2" ry="2.5" transform="rotate(11 486.0 390.7)" fill="#5f413a"/><ellipse cx="490.2" cy="385.5" rx="3.3" ry="2.5" transform="rotate(-11 490.2 385.5)" fill="#5f413a"/><ellipse cx="513.6" cy="373.6" rx="3.7" ry="2.9" transform="rotate(26 513.6 373.6)" fill="#65443b"/><ellipse cx="524.2" cy="388.9" rx="3.3" ry="2.6" transform="rotate(-23 524.2 388.9)" fill="#5f413a"/><ellipse cx="489.9" cy="378.9" rx="3.4" ry="2.6" transform="rotate(18 489.9 378.9)" fill="#77503e"/>
<path d="M457.6,370 C458.6,402.3 479.6,402.3 480.6,370" fill="none" stroke="#2f5a4a" stroke-width="1.4" opacity="0.5"/><path d="M457.6,370 C458.6,402.3 479.6,402.3 480.6,370" fill="none" stroke="#58b084" stroke-width="0.8"/><path d="M473.9,370 C474.9,406.4 496.6,406.4 497.6,370" fill="none" stroke="#2f5a4a" stroke-width="1.4" opacity="0.5"/><path d="M473.9,370 C474.9,406.4 496.6,406.4 497.6,370" fill="none" stroke="#58b084" stroke-width="0.8"/><path d="M491.1,370 C492.1,405.5 516.4,405.5 517.4,370" fill="none" stroke="#2f5a4a" stroke-width="1.4" opacity="0.5"/><path d="M491.1,370 C492.1,405.5 516.4,405.5 517.4,370" fill="none" stroke="#58b084" stroke-width="0.8"/><path d="M506.0,370 C507.0,410.0 531.0,410.0 532.0,370" fill="none" stroke="#2f5a4a" stroke-width="1.4" opacity="0.5"/><path d="M506.0,370 C507.0,410.0 531.0,410.0 532.0,370" fill="none" stroke="#58b084" stroke-width="0.8"/><path d="M528.6,370 C529.6,412.1 558.9,412.1 559.9,370" fill="none" stroke="#2f5a4a" stroke-width="1.4" opacity="0.5"/><path d="M528.6,370 C529.6,412.1 558.9,412.1 559.9,370" fill="none" stroke="#58b084" stroke-width="0.8"/><path d="M544.6,370 C545.6,409.9 565.1,409.9 566.1,370" fill="none" stroke="#2f5a4a" stroke-width="1.4" opacity="0.5"/><path d="M544.6,370 C545.6,409.9 565.1,409.9 566.1,370" fill="none" stroke="#58b084" stroke-width="0.8"/>
<path d="M452,372 L450,368 L454,360 L459,355 L469.7,355.8 L480.5,355.2 L491.2,354.8 L501.9,355.4 L512.6,355.2 L523.4,355.1 L534.1,355.5 L544.8,355.1 L555.5,355.6 L566.3,355.7 L577,355 L583,359 L586,369 L584,373 L574.0,372.9 L567.0,372.0 L567.0,372.5 Q562.5,379.1 558.0,372.5 L558.0,372.5 Q555.4,379.9 552.8,372.5 L552.8,372.5 Q549.9,382.0 547.0,372.5 L542.6,373.0 L542.6,372.5 Q538.9,377.7 535.3,372.5 L526.7,373.8 L520.8,372.8 L520.8,372.5 Q518.2,379.7 515.6,372.5 L507.9,373.6 L499.5,372.7 L493.3,373.6 L486.1,372.2 L486.1,372.5 Q482.3,381.1 478.5,372.5 L471.5,373.3 L462.5,372.5 L462.5,372.5 Q460.1,377.3 457.6,372.5 L457.6,372.5 Q453.6,380.2 449.6,372.5 L454,372 Z" fill="#5bbb84"/>
<path d="M450,368 L454,360 L459,355 L577,355 L583,359 L586,367 L582,364 L574.8,359.9 L569.6,361.0 L563.7,360.7 L555.8,361.1 L555.8,360.8 L552.4,366.4 L548.9,360.8 L540.7,361.2 L536.1,361.0 L530.6,360.8 L530.6,359.5 L527.2,364.5 L523.9,359.5 L517.4,361.8 L508.6,359.0 L503.0,360.8 L495.6,360.6 L489.3,361.8 L483.9,358.8 L476.9,361.6 L468.3,359.3 L460.6,359.8 L460,360 L457,365 L455,369 Z" fill="#8cd6ad"/>
<path d="M473.2,356 Q476.2,354.0 477.2,350.5 Q479.2,354.0 483.2,356 Z" fill="#8cd8ac"/><path d="M498.1,356 Q501.1,354.0 502.1,350.5 Q504.1,354.0 508.1,356 Z" fill="#8cd8ac"/><path d="M526.4,356 Q529.4,354.0 530.4,350.5 Q532.4,354.0 536.4,356 Z" fill="#8cd8ac"/><path d="M557.8,356 Q560.8,354.0 561.8,350.5 Q563.8,354.0 567.8,356 Z" fill="#8cd8ac"/>
<path d="M712,395 Q716,380 741,372 L741,412 Q730,415 718,405 Z" fill="#2e2020"/><ellipse cx="733" cy="395" rx="5" ry="4" fill="#7a4f3e"/><ellipse cx="724" cy="402" rx="3.5" ry="3" fill="#5e4139"/>
<path d="M720,385 C722,420 735,440 741,438 M728,388 C730,410 738,430 741,432" fill="none" stroke="#2f5a4a" stroke-width="1.8" opacity="0.6"/><path d="M720,385 C722,420 735,440 741,438 M728,388 C730,410 738,430 741,432" fill="none" stroke="#6cc894" stroke-width="1"/>
<path d="M705,371 Q706,366 712,366 L741,366 L741,386 Q735,390 732,386 Q728,392 724,386 Q720,396 716,392 Q712,402 707,399 Q708,388 705,371 Z" fill="#5ebf86"/>
<path d="M705,371 Q706,366 712,366 L741,366 L741,374 Q736,380 730,374 Q725,382 720,374 Q715,370 710,376 Q708,374 705,371 Z" fill="#8cd8ac"/><path d="M711,366 Q712,360 712,356 Q716,360 719,366 Z M706,369 Q702,367 700,368 Q704,364 711,366 Z" fill="#8cd8ac"/>
<g fill="#2e2020"><circle cx="238.0" cy="464.0" r="5.7"/><circle cx="243.5" cy="469.5" r="5.3"/><circle cx="248.2" cy="473.3" r="5.0"/><circle cx="254.2" cy="481.1" r="4.7"/><circle cx="258.1" cy="481.4" r="4.7"/><circle cx="262.3" cy="478.3" r="4.8"/><circle cx="266.4" cy="478.6" r="4.3"/><circle cx="270.7" cy="480.8" r="4.8"/><circle cx="275.7" cy="479.9" r="4.5"/><circle cx="279.3" cy="475.5" r="4.5"/><circle cx="284.2" cy="471.9" r="5.0"/><circle cx="289.5" cy="471.2" r="6.0"/><circle cx="294.1" cy="467.6" r="4.2"/><path d="M238,463 L238.0,464.0 L243.5,469.5 L248.2,473.3 L254.2,481.1 L258.1,481.4 L262.3,478.3 L266.4,478.6 L270.7,480.8 L275.7,479.9 L279.3,475.5 L284.2,471.9 L289.5,471.2 L294.1,467.6 L296,463 Z"/></g>
<ellipse cx="280.3" cy="469.5" rx="4.5" ry="3.5" transform="rotate(-12 280.3 469.5)" fill="#5f413a"/><ellipse cx="253.1" cy="474.1" rx="4.7" ry="3.6" transform="rotate(18 253.1 474.1)" fill="#77503e"/><ellipse cx="269.5" cy="472.8" rx="5.1" ry="4.0" transform="rotate(24 269.5 472.8)" fill="#5f413a"/><ellipse cx="287.3" cy="467.8" rx="3.3" ry="2.5" transform="rotate(-7 287.3 467.8)" fill="#5a3e38"/><ellipse cx="243.0" cy="468.6" rx="3.9" ry="3.1" transform="rotate(-15 243.0 468.6)" fill="#523a35"/><ellipse cx="260.7" cy="470.6" rx="3.9" ry="3.1" transform="rotate(-3 260.7 470.6)" fill="#523a35"/><ellipse cx="255.3" cy="482.0" rx="4.0" ry="3.1" transform="rotate(28 255.3 482.0)" fill="#65443b"/><ellipse cx="275.8" cy="478.8" rx="3.6" ry="2.8" transform="rotate(8 275.8 478.8)" fill="#65443b"/><ellipse cx="262.5" cy="478.2" rx="4.3" ry="3.3" transform="rotate(25 262.5 478.2)" fill="#5f413a"/><ellipse cx="251.0" cy="466.4" rx="3.5" ry="2.7" transform="rotate(-1 251.0 466.4)" fill="#523a35"/>
<path d="M176.6,464 C177.6,486.7 195.6,486.7 196.6,464" fill="none" stroke="#2f5a4a" stroke-width="1.4" opacity="0.5"/><path d="M176.6,464 C177.6,486.7 195.6,486.7 196.6,464" fill="none" stroke="#58b084" stroke-width="0.8"/><path d="M203.8,464 C204.8,488.3 236.1,488.3 237.1,464" fill="none" stroke="#2f5a4a" stroke-width="1.4" opacity="0.5"/><path d="M203.8,464 C204.8,488.3 236.1,488.3 237.1,464" fill="none" stroke="#58b084" stroke-width="0.8"/><path d="M240.4,464 C241.4,489.5 254.8,489.5 255.8,464" fill="none" stroke="#2f5a4a" stroke-width="1.4" opacity="0.5"/><path d="M240.4,464 C241.4,489.5 254.8,489.5 255.8,464" fill="none" stroke="#58b084" stroke-width="0.8"/>
<path d="M165,466 L163,462 L167,457 L172,452 L183.0,452.6 L194.0,452.4 L205.0,452.6 L216.0,451.7 L227.0,452.3 L238.0,452.3 L249.0,452.5 L260.0,451.6 L271.0,451.8 L282.0,452.6 L293,452 L299,456 L302,463 L300,467 L290.5,466.2 L282.9,466.5 L274.7,467.0 L267.5,467.7 L260.9,467.9 L260.9,466.5 Q258.8,470.0 256.6,466.5 L251.4,466.0 L246.0,465.3 L241.7,465.4 L236.0,467.8 L231.9,467.3 L225.7,467.3 L219.4,467.0 L212.5,466.7 L212.5,466.5 Q209.9,473.1 207.4,466.5 L207.4,466.5 Q204.6,473.7 201.9,466.5 L195.4,467.4 L187.9,465.6 L181.9,465.8 L173.0,465.8 L173.0,466.5 Q169.0,472.2 164.9,466.5 L167,466 Z" fill="#5bbb84"/>
<path d="M163,462 L167,457 L172,452 L293,452 L299,456 L302,461 L298,461 L287.1,455.6 L282.6,456.1 L275.9,457.2 L267.4,457.8 L261.7,458.9 L251.7,457.6 L251.7,456.0 L249.7,460.8 L247.6,456.0 L239.0,457.0 L230.1,456.9 L220.8,457.1 L214.1,457.5 L205.2,456.0 L196.0,455.7 L190.7,458.5 L182.2,456.6 L182.2,456.9 L178.7,462.4 L175.3,456.9 L168.5,457.5 L173,457 L170,462 L168,463 Z" fill="#8cd6ad"/>
<path d="M180.4,453 Q183.4,451.0 184.4,447.5 Q186.4,451.0 190.4,453 Z" fill="#8cd8ac"/><path d="M237.4,453 Q240.4,451.0 241.4,447.5 Q243.4,451.0 247.4,453 Z" fill="#8cd8ac"/><path d="M273.3,453 Q276.3,451.0 277.3,447.5 Q279.3,451.0 283.3,453 Z" fill="#8cd8ac"/>
<g transform="translate(5.7,323.5) scale(1.0)">
<ellipse cx="-16" cy="-0.5" rx="12" ry="6.2" transform="rotate(14 -16 -0.5)" fill="#6aa0b8"/>
<ellipse cx="16" cy="-0.5" rx="12" ry="6.2" transform="rotate(-14 16 -0.5)" fill="#6aa0b8"/>
<circle cx="0" cy="0" r="11.3" fill="#1c1668"/>
<ellipse cx="0" cy="-5" rx="10" ry="5.5" fill="#141048"/>
<path d="M-7.5,-1 Q0,-4 7.5,-1 Q6.5,6.5 0,6.5 Q-6.5,6.5 -7.5,-1 Z" fill="#ffffff"/>
<path d="M-1.6,-1.8 Q0,-2.6 1.6,-1.8 L0.6,5 Q0,5.8 -0.6,5 Z" fill="#111"/>
<rect x="-2" y="9" width="4" height="6" fill="#1c1668"/>
<path d="M-8,7.5 l-3,1.5 l1,2 M-5,10.5 l-1.5,2.5 l1.5,1.5 M8,7.5 l3,1.5 l-1,2 M5,10.5 l1.5,2.5 l-1.5,1.5" fill="none" stroke="#b02040" stroke-width="1.2"/>
</g>
<g transform="translate(428.5,356.5) scale(1.0)">
<ellipse cx="-16" cy="-0.5" rx="12" ry="6.2" transform="rotate(14 -16 -0.5)" fill="#6aa0b8"/>
<ellipse cx="16" cy="-0.5" rx="12" ry="6.2" transform="rotate(-14 16 -0.5)" fill="#6aa0b8"/>
<circle cx="0" cy="0" r="11.3" fill="#1c1668"/>
<ellipse cx="0" cy="-5" rx="10" ry="5.5" fill="#141048"/>
<path d="M-7.5,-1 Q0,-4 7.5,-1 Q6.5,6.5 0,6.5 Q-6.5,6.5 -7.5,-1 Z" fill="#ffffff"/>
<path d="M-1.6,-1.8 Q0,-2.6 1.6,-1.8 L0.6,5 Q0,5.8 -0.6,5 Z" fill="#111"/>
<rect x="-2" y="9" width="4" height="6" fill="#1c1668"/>
<path d="M-8,7.5 l-3,1.5 l1,2 M-5,10.5 l-1.5,2.5 l1.5,1.5 M8,7.5 l3,1.5 l-1,2 M5,10.5 l1.5,2.5 l-1.5,1.5" fill="none" stroke="#b02040" stroke-width="1.2"/>
</g>
<g transform="translate(640.4,330) scale(1.0)">
<ellipse cx="-16" cy="-0.5" rx="12" ry="6.2" transform="rotate(14 -16 -0.5)" fill="#6aa0b8"/>
<ellipse cx="16" cy="-0.5" rx="12" ry="6.2" transform="rotate(-14 16 -0.5)" fill="#6aa0b8"/>
<circle cx="0" cy="0" r="11.3" fill="#1c1668"/>
<ellipse cx="0" cy="-5" rx="10" ry="5.5" fill="#141048"/>
<path d="M-7.5,-1 Q0,-4 7.5,-1 Q6.5,6.5 0,6.5 Q-6.5,6.5 -7.5,-1 Z" fill="#ffffff"/>
<path d="M-1.6,-1.8 Q0,-2.6 1.6,-1.8 L0.6,5 Q0,5.8 -0.6,5 Z" fill="#111"/>
<rect x="-2" y="9" width="4" height="6" fill="#1c1668"/>
<path d="M-8,7.5 l-3,1.5 l1,2 M-5,10.5 l-1.5,2.5 l1.5,1.5 M8,7.5 l3,1.5 l-1,2 M5,10.5 l1.5,2.5 l-1.5,1.5" fill="none" stroke="#b02040" stroke-width="1.2"/>
</g>
<defs><linearGradient id="hg" x1="0" y1="0" x2="0" y2="1"><stop offset="0" stop-color="#d03448"/><stop offset="1" stop-color="#a03070"/></linearGradient><linearGradient id="bg2" x1="0" y1="0" x2="0" y2="1"><stop offset="0" stop-color="#4a98cc"/><stop offset="0.3" stop-color="#2f6ac8"/><stop offset="1" stop-color="#2858c0"/></linearGradient></defs>
<path d="M249.5,432 Q248,424 250,419 Q251.5,416 253,415.4 Q252,420 254,425 Q256.5,429 256.7,432 Z" fill="url(#hg)"/>
<path d="M242,453.4 Q240,436 246,429.5 Q250,427.5 255,428.5 Q260,431 260,442 Q260,452 254,453.4 Z" fill="url(#bg2)"/>
<path d="M242,443 Q249,439.5 254.2,440.4 Q251,448 242,448.7 Z" fill="#ffffff"/><path d="M241,443 Q243.5,442 245.5,442.5 Q245,446.5 242,447.8 L241,447.8 Z" fill="#111"/>
<path d="M0,490 L0,472 Q3,463.5 12.5,463.5 Q22,463.5 23.5,471.5 L35,471.5 Q44,472 46,481 Q50,479.5 55,480 Q62,482 62,490 Z" fill="#fff"/><path d="M81,490 Q95,483 115.5,483.3 L118,483 Q119.5,476.6 126.5,476.6 Q133,476.6 135,481 Q138,473.2 148.5,473.2 Q160,473.2 161.4,483 L162,490 Z" fill="#fff"/><path d="M172,490 Q172.5,477 181,472.5 Q186,471 200,471 L226,471 Q229,460.5 236.5,460.2 Q244,460.5 245,481.5 Q251,473.3 267,473.3 Q293,474 300,490 Z" fill="#fff"/><ellipse cx="320" cy="488" rx="10" ry="11" fill="#ffffff"/><circle cx="339.5" cy="487" r="10" fill="#ffffff"/><path d="M347,490 L360,482 L400,480 L430,482 L444,490 Z" fill="#fff"/><ellipse cx="381" cy="486" rx="19" ry="18" fill="#ffffff"/><circle cx="406" cy="484" r="8" fill="#ffffff"/><circle cx="508" cy="487" r="8.5" fill="#ffffff"/><circle cx="529" cy="478" r="14" fill="#ffffff"/><circle cx="553" cy="482" r="11" fill="#ffffff"/><circle cx="572" cy="487" r="8" fill="#ffffff"/><rect x="505" y="482" width="70" height="8" fill="#fff"/><path d="M599,490 Q620,483 636,483 L680,484 L692,489 Z" fill="#fff"/><circle cx="644" cy="486" r="10" fill="#ffffff"/><circle cx="667" cy="484" r="12" fill="#ffffff"/><circle cx="701" cy="482" r="10" fill="#ffffff"/><circle cx="729" cy="475" r="22" fill="#ffffff"/><rect x="695" y="478" width="46" height="12" fill="#fff"/>
<circle cx="203.7" cy="433" r="40" fill="#434343"/><circle cx="203.7" cy="433" r="34" fill="#393939"/>
<path d="M203.6,415 Q204.8,413.8 206,415 L222,434.2 Q223.4,437 220.4,437 L214,437 L214,449.6 Q214,451 212.6,451 L196.4,451 Q195,451 195,449.6 L195,437 L188.8,437 Q185.8,437 187.2,434.2 L203.2,415 Z" fill="#ffffff" transform="translate(0.8,0)"/>
<rect x="0" y="490" width="741" height="26" fill="#932c55"/><rect x="0" y="489.5" width="741" height="1" fill="#b8304a"/>
<rect x="0" y="516" width="741" height="39" fill="#70181c"/>
<rect x="208" y="490.5" width="10" height="1.5" fill="#e07050" opacity="0.8"/><rect x="726" y="490.5" width="10" height="1.5" fill="#e07050" opacity="0.8"/><path d="M239,491 L245,497 L251,491" fill="none" stroke="#c06040" stroke-width="0.8" opacity="0.5"/>
<path d="M0,214.5 H277.5 V487.5 H0" fill="none" stroke="#8a8a8e" stroke-width="1.3" opacity="0.65"/>
<!--/SCENE-->
</svg>
</div>
<div class="abs" style="left:670px;top:607px;width:58px;height:22px;background:#0a0d0f;border-radius:4px;z-index:3"></div>
<div class="abs" style="left:674px;top:611px;font-size:12px;line-height:14px;color:#d4d4d8;z-index:4;white-space:nowrap;will-change:transform">1877;835</div>
</body></html>
